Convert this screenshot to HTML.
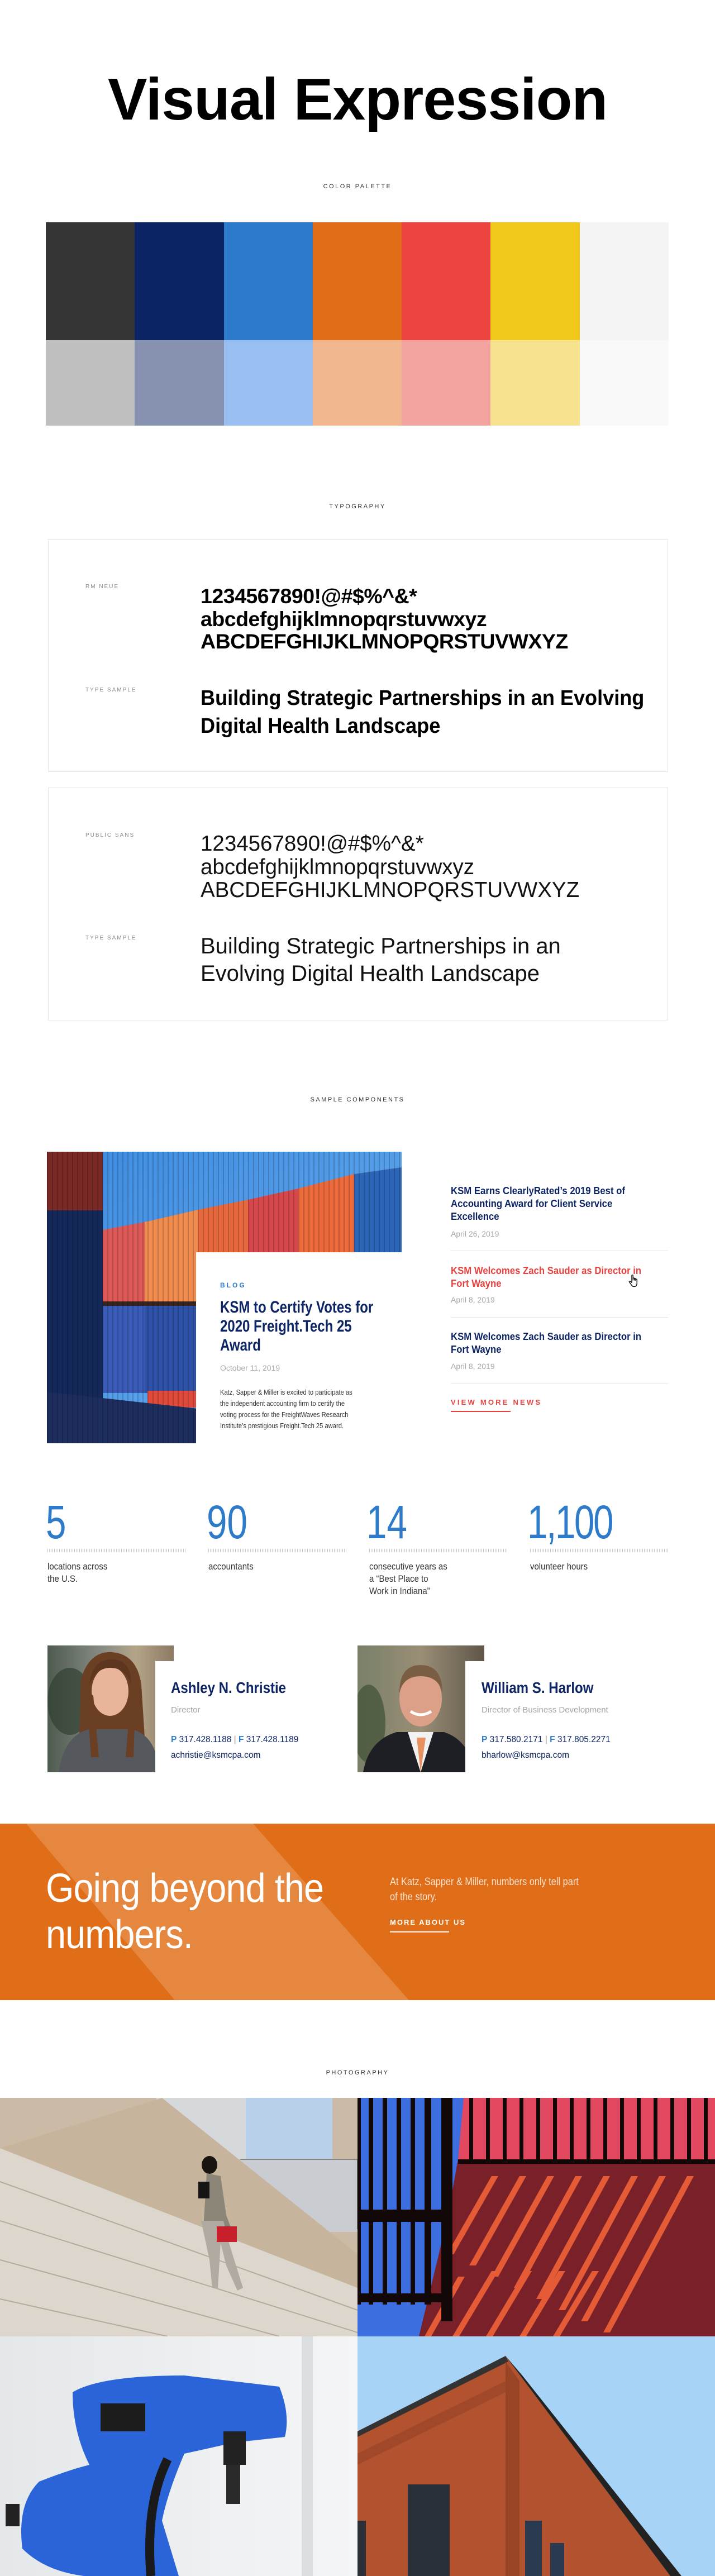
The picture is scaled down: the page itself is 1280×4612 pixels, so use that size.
<!DOCTYPE html>
<html><head><meta charset="utf-8">
<style>
*{margin:0;padding:0;box-sizing:border-box}
body{width:1280px;height:4612px;position:relative;background:#fff;font-family:"Liberation Sans",Arial,sans-serif;overflow:hidden}
.a{position:absolute;white-space:nowrap}
.lbl{position:absolute;left:0;width:1280px;text-align:center;font-size:11px;letter-spacing:2.5px;color:#333;line-height:14px}
.card{position:absolute;left:86px;width:1110px;border:1px solid #e6e6e6}
.tl{position:absolute;left:153px;font-size:10px;letter-spacing:2px;color:#8a8a8a;line-height:12px}
.sx{transform-origin:0 0}
.navy{color:#0d2565}
.date{font-size:14px;color:#a8a8a8;line-height:16px}
.dv{position:absolute;left:807px;width:389px;height:1px;background:#e6e6e6}
.num{position:absolute;font-size:84px;line-height:84px;color:#2e7bc9;transform:scaleX(.78);transform-origin:0 0}
.dots{position:absolute;top:2773px;width:248px;height:6px;background:repeating-linear-gradient(90deg,#c8c8c8 0 1px,transparent 1px 3px)}
.slab{position:absolute;top:2794px;font-size:17px;line-height:22px;color:#333;transform:scaleX(.88);transform-origin:0 0}
</style></head><body>

<div class="a" style="left:0;width:1280px;text-align:center;top:118px;font-size:106px;font-weight:bold;line-height:120px;color:#000;letter-spacing:-1px">Visual Expression</div>

<div class="lbl" style="top:327px">COLOR PALETTE</div>
<div style="position:absolute;left:82px;top:398px;width:1115px;height:364px;display:grid;grid-template-columns:repeat(7,1fr);grid-template-rows:211px 153px">
<div style="background:#353535"></div><div style="background:#0b2463"></div><div style="background:#2e7aca"></div><div style="background:#e06e18"></div><div style="background:#ee4441"></div><div style="background:#f0c91a"></div><div style="background:#f4f4f4"></div>
<div style="background:#bfbfbf"></div><div style="background:#8692b0"></div><div style="background:#99bff0"></div><div style="background:#f0b78f"></div><div style="background:#f4a4a0"></div><div style="background:#f7e28f"></div><div style="background:#f9f9f9"></div>
</div>

<div class="lbl" style="top:900px">TYPOGRAPHY</div>
<div class="card" style="top:965px;height:417px"></div>
<div class="tl" style="top:1045px">RM NEUE</div>
<div class="a" style="left:359px;top:1047px;font-size:37.5px;font-weight:bold;line-height:40.5px;color:#000;letter-spacing:-.5px">1234567890!@#$%^&amp;*<br>abcdefghijklmnopqrstuvwxyz<br>ABCDEFGHIJKLMNOPQRSTUVWXYZ</div>
<div class="tl" style="top:1230px">TYPE SAMPLE</div>
<div class="a sx" style="left:359px;top:1225px;font-size:38px;font-weight:bold;line-height:50px;color:#000;transform:scaleX(.95)">Building Strategic Partnerships in an Evolving<br>Digital Health Landscape</div>

<div class="card" style="top:1410px;height:417px"></div>
<div class="tl" style="top:1490px">PUBLIC SANS</div>
<div class="a" style="left:359px;top:1490px;font-size:38.5px;line-height:41.5px;color:#111">1234567890!@#$%^&amp;*<br>abcdefghijklmnopqrstuvwxyz<br>ABCDEFGHIJKLMNOPQRSTUVWXYZ</div>
<div class="tl" style="top:1674px">TYPE SAMPLE</div>
<div class="a" style="left:359px;top:1670px;font-size:40px;line-height:49px;color:#111">Building Strategic Partnerships in an<br>Evolving Digital Health Landscape</div>

<div class="lbl" style="top:1962px">SAMPLE COMPONENTS</div>

<svg style="position:absolute;left:84px;top:2062px" width="635" height="522" viewBox="0 0 635 522">
<defs>
<linearGradient id="sky" x1="0" y1="0" x2="1" y2="1"><stop offset="0" stop-color="#3d8ae0"/><stop offset="1" stop-color="#6ab0f0"/></linearGradient>
<pattern id="rib" width="9" height="10" patternUnits="userSpaceOnUse"><rect width="2" height="10" fill="#000" opacity=".18"/></pattern>
</defs>
<rect width="635" height="522" fill="url(#sky)"/>
<polygon points="100,140 175,126 270,104 360,86 450,66 550,40 635,28 635,300 100,300" fill="#e96a48"/>
<polygon points="100,140 175,126 175,300 100,300" fill="#de5a58"/>
<polygon points="175,126 270,104 270,300 175,300" fill="#ef8c4e"/>
<polygon points="270,104 360,86 360,300 270,300" fill="#e8683e"/>
<polygon points="360,86 450,66 450,300 360,300" fill="#d6484b"/>
<polygon points="450,66 550,40 550,300 450,300" fill="#ec6a3c"/>
<polygon points="550,40 635,28 635,300 550,300" fill="#2c66b8"/>
<rect x="100" y="272" width="170" height="160" fill="#3a5cb8"/>
<rect x="175" y="272" width="95" height="160" fill="#2e52a8"/>
<rect x="100" y="268" width="170" height="8" fill="#3a2420"/>
<rect x="180" y="428" width="90" height="30" fill="#e04a3a"/>
<rect x="0" y="0" width="100" height="522" fill="#15285a"/>
<rect x="0" y="0" width="100" height="105" fill="#7a2a26"/>
<polygon points="0,430 270,460 270,522 0,522" fill="#1d2d5e"/>
<rect x="0" y="0" width="635" height="522" fill="url(#rib)"/>
</svg>
<div style="position:absolute;left:351px;top:2242px;width:368px;height:342px;background:#fff"></div>
<div class="a" style="left:394px;top:2294px;font-size:12px;font-weight:bold;letter-spacing:3px;color:#2e7bc9;line-height:14px">BLOG</div>
<div class="a sx navy" style="left:394px;top:2324px;font-size:30px;font-weight:bold;line-height:34px;transform:scaleX(.8)">KSM to Certify Votes for<br>2020 Freight.Tech 25<br>Award</div>
<div class="a date" style="left:394px;top:2441px">October 11, 2019</div>
<div class="a sx" style="left:394px;top:2483px;font-size:13px;line-height:20px;color:#333;transform:scaleX(.86)">Katz, Sapper &amp; Miller is excited to participate as<br>the independent accounting firm to certify the<br>voting process for the FreightWaves Research<br>Institute’s prestigious Freight.Tech 25 award.</div>

<div class="a sx navy" style="left:807px;top:2121px;font-size:18px;font-weight:bold;line-height:23px;transform:scaleX(.93)">KSM Earns ClearlyRated’s 2019 Best of<br>Accounting Award for Client Service<br>Excellence</div>
<div class="a date" style="left:807px;top:2201px">April 26, 2019</div>
<div class="dv" style="top:2239px"></div>
<div class="a sx" style="left:807px;top:2264px;font-size:18px;font-weight:bold;line-height:23px;color:#e8413e;transform:scaleX(.93)">KSM Welcomes Zach Sauder as Director in<br>Fort Wayne</div>
<svg style="position:absolute;left:1125px;top:2281px" width="24" height="26" viewBox="0 0 24 26"><path d="M6 2.5c0-1.2 2.2-1.2 2.2 0V11l.3-3.2c.2-1.2 2.1-1 2.1.2v3l.3-2.3c.2-1.100 2-1 2 .2v2.6l.4-1.7c.3-1 1.9-.8 1.9.3V17c0 3-1.8 5.5-4.6 5.5H9.5C7.5 22.5 6.4 21 5 19L1.6 14.3c-.7-1 .6-2.3 1.6-1.4L6 15.200z" fill="#fff" stroke="#000" stroke-width="1.3" stroke-linejoin="round"/></svg>
<div class="a date" style="left:807px;top:2319px">April 8, 2019</div>
<div class="dv" style="top:2358px"></div>
<div class="a sx navy" style="left:807px;top:2382px;font-size:18px;font-weight:bold;line-height:23px;transform:scaleX(.93)">KSM Welcomes Zach Sauder as Director in<br>Fort Wayne</div>
<div class="a date" style="left:807px;top:2438px">April 8, 2019</div>
<div class="dv" style="top:2477px"></div>
<div class="a" style="left:807px;top:2504px;font-size:13px;font-weight:bold;letter-spacing:3.2px;color:#e8413e;line-height:14px">VIEW MORE NEWS</div>
<div style="position:absolute;left:807px;top:2526px;width:107px;height:2px;background:#e8413e"></div>

<div class="num" style="left:82px;top:2683px">5</div>
<div class="num" style="left:370px;top:2683px">90</div>
<div class="num" style="left:656px;top:2683px">14</div>
<div class="num" style="left:944px;top:2683px;letter-spacing:-3px">1,100</div>
<div class="dots" style="left:85px"></div>
<div class="dots" style="left:373px"></div>
<div class="dots" style="left:661px"></div>
<div class="dots" style="left:949px"></div>
<div class="slab" style="left:85px">locations across<br>the U.S.</div>
<div class="slab" style="left:373px">accountants</div>
<div class="slab" style="left:661px">consecutive years as<br>a “Best Place to<br>Work in Indiana”</div>
<div class="slab" style="left:949px">volunteer hours</div>

<svg style="position:absolute;left:85px;top:2946px" width="226" height="227" viewBox="0 0 226 227">
<defs><linearGradient id="bg1" x1="0" x2="1"><stop offset="0" stop-color="#4e5a50"/><stop offset=".45" stop-color="#8a8f86"/><stop offset=".7" stop-color="#b4a488"/><stop offset="1" stop-color="#8c7a64"/></linearGradient></defs>
<rect width="226" height="227" fill="url(#bg1)"/>
<ellipse cx="40" cy="100" rx="40" ry="60" fill="#2f4030" opacity=".7"/>
<path d="M55 227 L60 60 Q75 10 115 12 Q160 15 168 70 L178 227Z" fill="#6b3f24"/>
<path d="M20 227 Q30 160 75 150 L150 150 Q195 160 200 227Z" fill="#55585c"/>
<ellipse cx="112" cy="82" rx="33" ry="44" fill="#e8b49a"/>
<path d="M75 70 Q80 25 115 25 Q150 25 150 70 Q140 40 112 40 Q88 40 75 70Z" fill="#5e3620"/>
<path d="M70 80 L78 200 L92 200 L82 90Z M150 80 L140 200 L154 200 L158 90Z" fill="#6b3f24"/>
</svg>
<div style="position:absolute;left:278px;top:2974px;width:40px;height:210px;background:#fff"></div>
<div class="a sx navy" style="left:306px;top:3006px;font-size:28px;font-weight:bold;line-height:32px;transform:scaleX(.86)">Ashley N. Christie</div>
<div class="a" style="left:306px;top:3053px;font-size:15px;color:#a5a5a5;line-height:18px">Director</div>
<div class="a navy" style="left:306px;top:3106px;font-size:15.5px;line-height:18px"><b style="color:#2e7bc9">P</b> 317.428.1188 <span style="color:#888">|</span> <b style="color:#2e7bc9">F</b> 317.428.1189</div>
<div class="a navy" style="left:306px;top:3134px;font-size:15.5px;line-height:18px">achristie@ksmcpa.com</div>

<svg style="position:absolute;left:640px;top:2946px" width="227" height="227" viewBox="0 0 227 227">
<defs><linearGradient id="bg2" x1="0" x2="1"><stop offset="0" stop-color="#7a8068"/><stop offset=".5" stop-color="#9a8e76"/><stop offset="1" stop-color="#5f5648"/></linearGradient></defs>
<rect width="227" height="227" fill="url(#bg2)"/>
<ellipse cx="20" cy="140" rx="30" ry="70" fill="#3f5034" opacity=".7"/>
<path d="M10 227 Q20 170 70 155 L155 155 Q200 170 210 227Z" fill="#1e1f24"/>
<path d="M90 155 L113 227 L136 155Z" fill="#f2f2f2"/>
<path d="M106 165 L113 227 L122 165Z" fill="#e89060"/>
<ellipse cx="113" cy="95" rx="38" ry="50" fill="#dca088"/>
<path d="M75 85 Q75 35 113 35 Q152 35 152 85 Q145 55 113 55 Q82 55 75 85Z" fill="#7a5e44"/>
<path d="M95 118 Q113 130 132 118" stroke="#fff" stroke-width="5" fill="none"/>
</svg>
<div style="position:absolute;left:833px;top:2974px;width:40px;height:210px;background:#fff"></div>
<div class="a sx navy" style="left:862px;top:3006px;font-size:28px;font-weight:bold;line-height:32px;transform:scaleX(.86)">William S. Harlow</div>
<div class="a" style="left:862px;top:3053px;font-size:15px;color:#a5a5a5;line-height:18px">Director of Business Development</div>
<div class="a navy" style="left:862px;top:3106px;font-size:15.5px;line-height:18px"><b style="color:#2e7bc9">P</b> 317.580.2171 <span style="color:#888">|</span> <b style="color:#2e7bc9">F</b> 317.805.2271</div>
<div class="a navy" style="left:862px;top:3134px;font-size:15.5px;line-height:18px">bharlow@ksmcpa.com</div>

<svg style="position:absolute;left:0;top:3265px" width="1280" height="316" viewBox="0 0 1280 316">
<rect width="1280" height="316" fill="#e06e18"/>
<polygon points="47,0 453,0 732,316 313,316" fill="#e5873e"/>
</svg>
<div class="a sx" style="left:82px;top:3340px;font-size:72px;line-height:83px;color:#fff;letter-spacing:-1px;transform:scaleX(.9)">Going beyond the<br>numbers.</div>
<div class="a sx" style="left:698px;top:3356px;font-size:19px;line-height:27px;color:#fbe2cf;transform:scaleX(.86)">At Katz, Sapper &amp; Miller, numbers only tell part<br>of the story.</div>
<div class="a" style="left:698px;top:3435px;font-size:13px;font-weight:bold;letter-spacing:2px;color:#fff;line-height:14px">MORE ABOUT US</div>
<div style="position:absolute;left:698px;top:3457px;width:106px;height:3px;background:#f8d4b8"></div>

<div class="lbl" style="top:3704px">PHOTOGRAPHY</div>

<svg style="position:absolute;left:0;top:3756px" width="640" height="427" viewBox="0 0 640 427">
<rect width="640" height="427" fill="#cbbba6"/>
<rect x="440" y="0" width="155" height="110" fill="#b8d0ea"/>
<rect x="280" y="0" width="160" height="110" fill="#d6d9dc"/>
<rect x="430" y="110" width="210" height="130" fill="#c9ccd0"/>
<path d="M430 110 L640 110 L640 235" fill="none" stroke="#888" stroke-width="2"/>
<polygon points="0,90 640,340 640,427 0,427" fill="#dcd6cc"/>
<polygon points="0,90 290,0 640,280 640,340" fill="#c7b49c"/>
<g stroke="#b5aa9a" stroke-width="2"><line x1="0" y1="150" x2="640" y2="380"/><line x1="0" y1="220" x2="640" y2="420"/><line x1="0" y1="290" x2="500" y2="427"/><line x1="0" y1="360" x2="300" y2="427"/></g>
<ellipse cx="375" cy="120" rx="14" ry="16" fill="#1a1410"/>
<path d="M370 135 L395 140 L405 210 L420 250 L395 260 L385 220 L365 220Z" fill="#8c8678"/>
<path d="M360 220 L375 290 L380 340 L390 340 L395 260 L405 300 L425 345 L435 340 L410 260 L400 220Z" fill="#b0aaa0"/>
<rect x="388" y="230" width="36" height="28" fill="#c8202a"/>
<rect x="355" y="150" width="20" height="30" fill="#151515"/>
</svg>
<svg style="position:absolute;left:640px;top:3756px" width="640" height="427" viewBox="0 0 640 427">
<rect width="640" height="427" fill="#3c6ee0"/>
<polygon points="180,110 640,110 640,427 110,427 160,220" fill="#7a2028"/>
<polygon points="190,0 640,0 640,110 180,110" fill="#e24860"/>
<g fill="#ff6a3a" opacity=".8">
<polygon points="160,280 240,140 252,140 172,280"/><polygon points="200,300 290,140 302,140 212,300"/><polygon points="240,320 340,140 352,140 252,320"/><polygon points="280,340 390,140 402,140 292,340"/><polygon points="320,360 440,140 452,140 332,360"/><polygon points="360,380 490,140 502,140 372,380"/><polygon points="400,400 540,140 552,140 412,400"/><polygon points="440,420 590,140 602,140 452,420"/>
<polygon points="120,427 180,320 192,320 132,427"/><polygon points="170,427 240,310 252,310 182,427"/><polygon points="230,427 300,310 312,310 242,427"/><polygon points="290,427 360,310 372,310 302,427"/><polygon points="350,427 420,310 432,310 362,427"/>
</g>
<g fill="#120808"><rect x="0" y="0" width="6" height="370"/><rect x="20" y="0" width="8" height="370"/><rect x="45" y="0" width="8" height="370"/><rect x="70" y="0" width="8" height="370"/><rect x="95" y="0" width="8" height="370"/><rect x="120" y="0" width="12" height="370"/><rect x="150" y="0" width="20" height="400"/>
<rect x="0" y="200" width="150" height="22"/><rect x="0" y="350" width="150" height="16"/><rect x="180" y="110" width="460" height="8"/>
<rect x="200" y="0" width="7" height="110"/><rect x="230" y="0" width="7" height="110"/><rect x="260" y="0" width="7" height="110"/><rect x="290" y="0" width="7" height="110"/><rect x="320" y="0" width="7" height="110"/><rect x="350" y="0" width="7" height="110"/><rect x="380" y="0" width="7" height="110"/><rect x="410" y="0" width="7" height="110"/><rect x="440" y="0" width="7" height="110"/><rect x="470" y="0" width="7" height="110"/><rect x="500" y="0" width="7" height="110"/><rect x="530" y="0" width="7" height="110"/><rect x="560" y="0" width="7" height="110"/><rect x="590" y="0" width="7" height="110"/><rect x="620" y="0" width="7" height="110"/></g>
</svg>
<svg style="position:absolute;left:0;top:4183px" width="640" height="429" viewBox="0 0 640 429">
<defs><linearGradient id="wb" x1="0" x2="1"><stop offset="0" stop-color="#e4e8ea"/><stop offset="1" stop-color="#f4f5f6"/></linearGradient></defs>
<rect width="640" height="429" fill="url(#wb)"/>
<rect x="540" y="0" width="20" height="429" fill="#dcdfe2"/>
<path d="M130 100 Q180 70 330 70 L500 90 Q520 140 510 180 L420 190 L330 210 Q300 280 290 330 L320 429 L150 429 Q80 420 40 380 Q30 300 70 260 Q120 240 160 230 Q130 170 130 100Z" fill="#2a64d8"/>
<rect x="180" y="120" width="80" height="50" fill="#1c1c1c"/>
<path d="M300 220 Q260 300 270 429" stroke="#1a1a1a" stroke-width="16" fill="none"/>
<rect x="400" y="170" width="40" height="60" fill="#222"/>
<rect x="405" y="230" width="25" height="70" fill="#2a2a2a"/>
<rect x="10" y="300" width="25" height="40" fill="#222"/>
</svg>
<svg style="position:absolute;left:640px;top:4183px" width="640" height="429" viewBox="0 0 640 429">
<rect width="640" height="429" fill="#a7d3f6"/>
<polygon points="0,170 265,35 560,429 0,429" fill="#b2522e"/>
<polygon points="265,35 295,70 580,429 560,429" fill="#222"/>
<polygon points="0,170 265,35 270,45 0,180" fill="#333"/>
<polygon points="265,45 290,80 290,429 265,429" fill="#9a4426"/>
<rect x="90" y="265" width="75" height="185" fill="#2a3038"/>
<rect x="300" y="330" width="30" height="140" fill="#2a3a50"/>
<rect x="345" y="370" width="25" height="80" fill="#2a3a50"/>
<rect x="0" y="330" width="15" height="130" fill="#2a3038"/>
<polygon points="0,210 265,80 265,100 0,230" fill="#a0482a"/>
</svg>
</body></html>
